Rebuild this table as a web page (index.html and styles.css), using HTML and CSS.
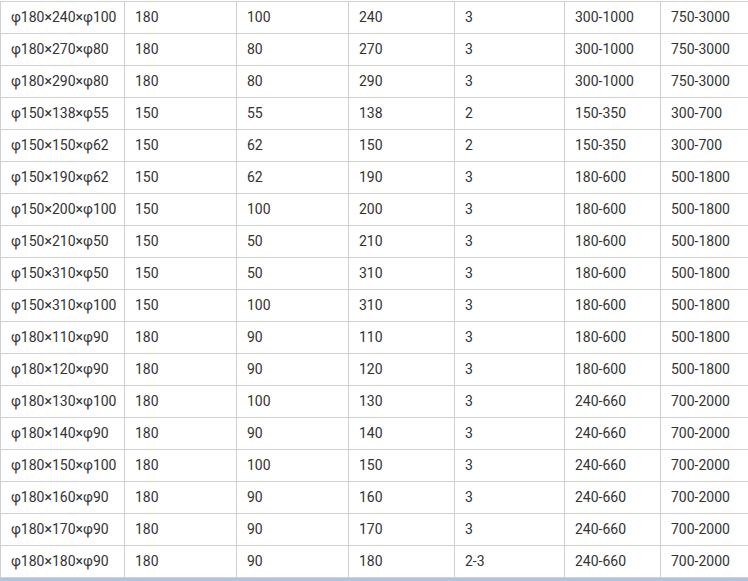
FILE: index.html
```html
<!DOCTYPE html>
<html>
<head>
<meta charset="utf-8">
<link rel="stylesheet" href="styles.css">
</head>
<body>
<div class="wrap">
<table class="spec">
<colgroup><col class="c1"><col class="c2"><col class="c3"><col class="c4"><col class="c5"><col class="c6"><col class="c7"></colgroup>
<tbody>
<tr><td>φ180×240×φ100</td><td>180</td><td>100</td><td>240</td><td>3</td><td>300-1000</td><td>750-3000</td></tr>
<tr><td>φ180×270×φ80</td><td>180</td><td>80</td><td>270</td><td>3</td><td>300-1000</td><td>750-3000</td></tr>
<tr><td>φ180×290×φ80</td><td>180</td><td>80</td><td>290</td><td>3</td><td>300-1000</td><td>750-3000</td></tr>
<tr><td>φ150×138×φ55</td><td>150</td><td>55</td><td>138</td><td>2</td><td>150-350</td><td>300-700</td></tr>
<tr><td>φ150×150×φ62</td><td>150</td><td>62</td><td>150</td><td>2</td><td>150-350</td><td>300-700</td></tr>
<tr><td>φ150×190×φ62</td><td>150</td><td>62</td><td>190</td><td>3</td><td>180-600</td><td>500-1800</td></tr>
<tr><td>φ150×200×φ100</td><td>150</td><td>100</td><td>200</td><td>3</td><td>180-600</td><td>500-1800</td></tr>
<tr><td>φ150×210×φ50</td><td>150</td><td>50</td><td>210</td><td>3</td><td>180-600</td><td>500-1800</td></tr>
<tr><td>φ150×310×φ50</td><td>150</td><td>50</td><td>310</td><td>3</td><td>180-600</td><td>500-1800</td></tr>
<tr><td>φ150×310×φ100</td><td>150</td><td>100</td><td>310</td><td>3</td><td>180-600</td><td>500-1800</td></tr>
<tr><td>φ180×110×φ90</td><td>180</td><td>90</td><td>110</td><td>3</td><td>180-600</td><td>500-1800</td></tr>
<tr><td>φ180×120×φ90</td><td>180</td><td>90</td><td>120</td><td>3</td><td>180-600</td><td>500-1800</td></tr>
<tr><td>φ180×130×φ100</td><td>180</td><td>100</td><td>130</td><td>3</td><td>240-660</td><td>700-2000</td></tr>
<tr><td>φ180×140×φ90</td><td>180</td><td>90</td><td>140</td><td>3</td><td>240-660</td><td>700-2000</td></tr>
<tr><td>φ180×150×φ100</td><td>180</td><td>100</td><td>150</td><td>3</td><td>240-660</td><td>700-2000</td></tr>
<tr><td>φ180×160×φ90</td><td>180</td><td>90</td><td>160</td><td>3</td><td>240-660</td><td>700-2000</td></tr>
<tr><td>φ180×170×φ90</td><td>180</td><td>90</td><td>170</td><td>3</td><td>240-660</td><td>700-2000</td></tr>
<tr><td>φ180×180×φ90</td><td>180</td><td>90</td><td>180</td><td>2-3</td><td>240-660</td><td>700-2000</td></tr>
</tbody>
</table>
<div class="bar"></div>
</div>
</body>
</html>
```
FILE: styles.css
```css
html, body {
  margin: 0;
  padding: 0;
  background: #fff;
}
.wrap {
  padding-top: 1px;
  width: 748px;
  overflow: hidden;
}
.spec {
  border-collapse: collapse;
  table-layout: fixed;
  width: 749px;
  font-family: Roboto, "Liberation Sans", sans-serif;
  font-size: 14px;
  color: #333;
}
.c1 { width: 124px; }
.c2 { width: 112px; }
.c3 { width: 112px; }
.c4 { width: 106px; }
.c5 { width: 110px; }
.c6 { width: 96px; }
.c7 { width: 89px; }
.spec td {
  border: 1px solid #d0d0d0;
  height: 31px;
  padding: 0 0 0 10px;
  box-sizing: border-box;
  line-height: 31px;
  white-space: nowrap;
  vertical-align: middle;
}
.bar {
  height: 3px;
  background: #a9c6e8;
}
```
